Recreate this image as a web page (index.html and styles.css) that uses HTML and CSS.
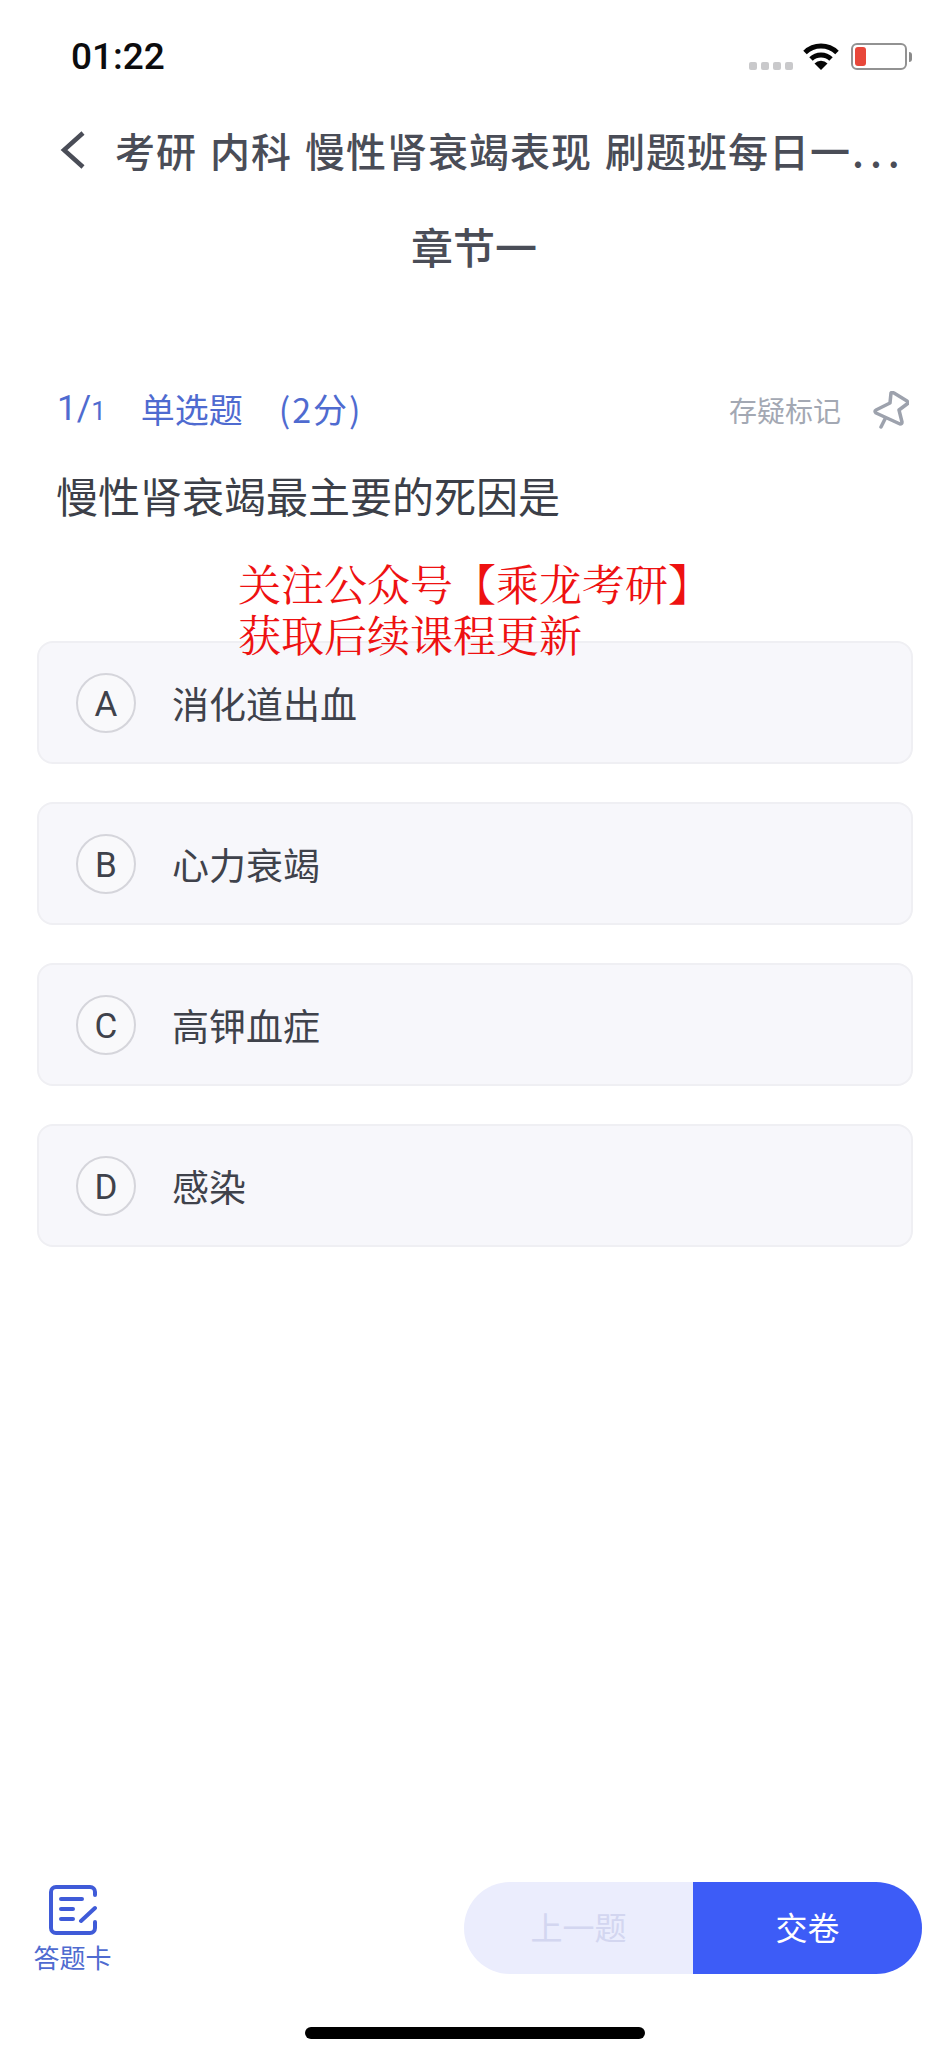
FILE: index.html
```html
<!DOCTYPE html>
<html lang="zh-CN">
<head>
<meta charset="utf-8">
<title>章节一</title>
<link rel="stylesheet" href="styles.css">
</head>
<body>
<div class="page">
  <header class="status">
    <span class="time">01:22</span>
    <div class="status-icons">
      <div class="signal"><i></i><i></i><i></i><i></i></div>
      <svg class="wifi" viewBox="0 0 36 27"><path d="M2 9.5a23 23 0 0 1 32 0" /><path d="M8 16a14.5 14.5 0 0 1 20 0" /><path class="wifi-dot" d="M18 27l-6.5-6.5a9 9 0 0 1 13 0z"/></svg>
      <div class="battery"><div class="battery-body"><div class="battery-level"></div></div><div class="battery-nub"></div></div>
    </div>
  </header>
  <nav class="nav">
    <svg class="back" viewBox="0 0 26 40"><path d="M23 3L4 20l19 17"/></svg>
    <h1 class="title">考研 内科 慢性肾衰竭表现 刷题班每日一<span class="dots">...</span></h1>
  </nav>
  <h2 class="chapter">章节一</h2>
  <div class="meta">
    <div class="meta-left">
      <span class="count">1/<small>1</small></span>
      <span>单选题</span>
      <span class="score">(2分)</span>
    </div>
    <div class="mark">
      <span>存疑标记</span>
      <svg class="pin" viewBox="0 0 36 38"><path d="M18 2q1-1 3 0l13 8q2 2 0 3l-8 6 3 12q0 2-2 2L3 22q-2-2 0-3l14-7zM12 28l-4 8"/></svg>
    </div>
  </div>
  <p class="question">慢性肾衰竭最主要的死因是</p>
  <div class="watermark">关注公众号【乘龙考研】<br>获取后续课程更新</div>
  <ul class="options">
    <li class="option"><span class="letter">A</span><span>消化道出血</span></li>
    <li class="option"><span class="letter">B</span><span>心力衰竭</span></li>
    <li class="option"><span class="letter">C</span><span>高钾血症</span></li>
    <li class="option"><span class="letter">D</span><span>感染</span></li>
  </ul>
  <footer class="bottom">
    <div class="card-link">
      <svg class="card-icon" viewBox="0 0 48 50"><path d="M46 10V7a5 5 0 0 0-5-5H7a5 5 0 0 0-5 5v36a5 5 0 0 0 5 5h34a5 5 0 0 0 5-5v-6"/><path d="M12 14h21M12 24h12M12 34h12M32 36l14-13"/></svg>
      <span>答题卡</span>
    </div>
    <div class="buttons">
      <button class="btn prev">上一题</button>
      <button class="btn submit">交卷</button>
    </div>
  </footer>
  <div class="home-bar"></div>
</div>
</body>
</html>
```
FILE: styles.css
```css
* { box-sizing: border-box; }
html, body { margin: 0; padding: 0; background: #fff; }
body { font-family: "Noto Sans CJK SC", "Noto Sans", sans-serif; }
.page { position: relative; width: 950px; height: 2057px; display: flex; flex-direction: column; overflow: hidden; }

.status { height: 99px; padding: 0 38px 0 71px; display: flex; justify-content: space-between; align-items: flex-start; }
.time { font-family: Roboto, "Liberation Sans", sans-serif; font-weight: 500; font-size: 37px; line-height: 114px; height: 99px; color: #0c0c0e; }
.status-icons { display: flex; align-items: flex-start; padding-top: 43px; }
.signal { display: flex; gap: 4px; margin-top: 19px; margin-right: 10px; }
.signal i { width: 8px; height: 8px; background: #c9c9cb; border-radius: 2px; }
.wifi { width: 36px; height: 27px; margin-right: 12px; fill: none; stroke: #050505; stroke-width: 5; }
.wifi-dot { fill: #050505; stroke: none; }
.battery { display: flex; align-items: center; }
.battery-body { width: 56px; height: 27px; border: 2px solid #929292; border-radius: 6px; padding: 2px; }
.battery-level { width: 11px; height: 19px; background: #e8473a; border-radius: 3px; }
.battery-nub { width: 3px; height: 10px; margin-left: 2px; background: #8a8a8a; border-radius: 0 3px 3px 0; }

.nav { height: 102px; padding-left: 60px; display: flex; align-items: center; }
.back { width: 26px; height: 40px; flex: none; fill: none; stroke: #4a4d57; stroke-width: 4.5; }
.title { margin: 0 0 0 29px; font-size: 40px; line-height: 50px; font-weight: 500; color: #4a4d57; white-space: nowrap; word-spacing: 3px; letter-spacing: 1px; }
.dots { letter-spacing: 6px; margin-left: 1px; }
.chapter { margin: 0; height: 90px; line-height: 90px; padding-right: 2px; text-align: center; font-size: 42px; font-weight: 500; color: #4a4d57; }

.meta { margin-top: 94px; height: 50px; padding: 0 41px 0 57px; display: flex; justify-content: space-between; align-items: center; }
.meta-left { display: flex; gap: 36px; font-size: 34px; line-height: 50px; color: #4f6bd0; }
.count { font-family: Roboto, sans-serif; font-size: 35px; margin-right: -1px; }
.count small { font-size: 26px; }
.score { letter-spacing: 2px; }
.mark { display: flex; align-items: center; gap: 32px; font-size: 28px; color: #a3a8b3; }
.pin { width: 36px; height: 38px; fill: none; stroke: #9da2ad; stroke-width: 3.5; stroke-linejoin: round; stroke-linecap: round; }

.question { margin: 35px 0 0; padding-left: 56px; font-size: 42px; line-height: 50px; color: #3c3f48; }

.watermark { position: absolute; left: 238px; top: 561px; font-family: "Liberation Serif", "Noto Serif CJK SC", "Noto Sans CJK SC", serif; font-size: 43px; line-height: 51px; color: #ee1111; z-index: 2; }

.options { list-style: none; margin: 121px 0 0; padding: 0 37px; display: flex; flex-direction: column; gap: 38px; }
.option { height: 123px; background: #f7f7fb; border: 2px solid #efeff3; border-radius: 16px; padding-left: 37px; display: flex; align-items: center; gap: 36px; font-size: 37px; color: #3f424b; }
.letter { width: 60px; height: 60px; flex: none; border: 2px solid #d5d5db; border-radius: 50%; background: #f9f9fb; padding-top: 4px; display: flex; align-items: center; justify-content: center; font-family: Roboto, sans-serif; font-size: 35px; color: #3f424b; }

.bottom { position: absolute; left: 0; right: 0; top: 1882px; height: 92px; padding: 0 28px 0 34px; display: flex; justify-content: space-between; }
.card-link { width: 77px; display: flex; flex-direction: column; align-items: center; font-size: 26px; line-height: 30px; color: #4f6bd0; white-space: nowrap; }
.card-icon { width: 48px; height: 50px; margin-top: 3px; margin-bottom: 7px; fill: none; stroke: #3f5bd8; stroke-width: 4; stroke-linecap: round; flex: none; }
.buttons { display: flex; border-radius: 46px; overflow: hidden; }
.btn { width: 229px; height: 92px; border: 0; padding: 0 0 4px; font-family: inherit; font-size: 32px; }
.prev { background: #ebedfd; color: #d3d6f0; }
.submit { background: #3d5cf7; color: #fff; }

.home-bar { position: absolute; left: 305px; top: 2027px; width: 340px; height: 12px; background: #000; border-radius: 6px; }
```
